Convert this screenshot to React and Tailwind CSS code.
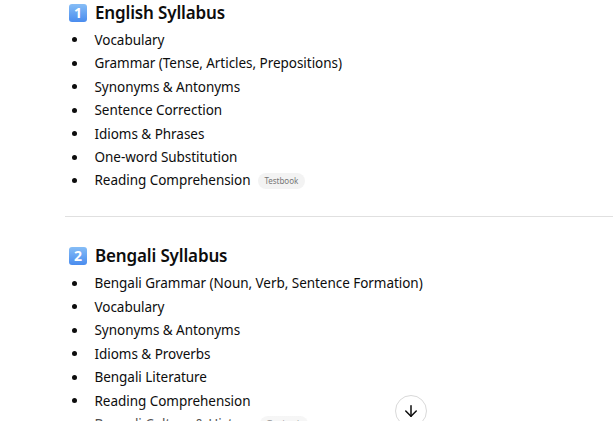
import React from 'react';
import { ArrowDown } from 'lucide-react';

function Keycap({ n }) {
  return (
    <span className="ml-[4px] mr-[8px] flex h-[18px] w-[18px] items-center justify-center rounded-[3px] bg-gradient-to-b from-[#86bdf6] to-[#4a8cee] text-[14px] font-bold leading-none text-white">
      {n}
    </span>
  );
}

function Pill({ text }) {
  return (
    <span className="ml-[7px] inline-flex h-[16px] items-center rounded-full bg-[#f3f3f3] px-[7px] text-[8px] text-[#777777]">
      {text}
    </span>
  );
}

function Section({ n, title, items }) {
  return (
    <section>
      <h2 className="flex h-[24px] items-center text-[17px] font-semibold leading-[24px] tracking-[-0.15px] text-[#0d0d0d]">
        <Keycap n={n} />
        {title}
      </h2>
      <ul className="mt-[3.5px]">
        {items.map((it) => (
          <li key={it.label} className="flex h-[23.45px] items-center text-[13.5px] tracking-[-0.04px] text-[#0d0d0d]">
            <span className="ml-[7px] mr-[17.5px] h-[5px] w-[5px] rounded-full bg-[#0d0d0d]" />
            {it.label}
            {it.pill && <Pill text={it.pill} />}
          </li>
        ))}
      </ul>
    </section>
  );
}

const english = [
  { label: 'Vocabulary' },
  { label: 'Grammar (Tense, Articles, Prepositions)' },
  { label: 'Synonyms & Antonyms' },
  { label: 'Sentence Correction' },
  { label: 'Idioms & Phrases' },
  { label: 'One-word Substitution' },
  { label: 'Reading Comprehension', pill: 'Testbook' },
];

const bengali = [
  { label: 'Bengali Grammar (Noun, Verb, Sentence Formation)' },
  { label: 'Vocabulary' },
  { label: 'Synonyms & Antonyms' },
  { label: 'Idioms & Proverbs' },
  { label: 'Bengali Literature' },
  { label: 'Reading Comprehension' },
  { label: 'Bengali Culture & History', pill: 'Testbook' },
];

export default function App() {
  return (
    <div className="relative h-[421px] w-[613px] overflow-hidden bg-white font-['Noto_Sans',sans-serif]">
      <div className="pl-[65px] pt-[0.7px]">
        <Section n="1" title="English Syllabus" items={english} />
        <hr className="mb-[27px] mt-[24px] border-t border-[#e0e0e0]" />
        <Section n="2" title="Bengali Syllabus" items={bengali} />
      </div>
      {/* fade at the bottom, scroll button sits over it */}
      <div className="absolute bottom-0 left-0 h-[16px] w-full bg-gradient-to-b from-transparent to-white/30" />
      <button className="absolute left-[395px] top-[395px] flex h-[32px] w-[32px] items-center justify-center rounded-full border border-[#d9d9d9] bg-white text-[#0d0d0d]">
        <ArrowDown size={18} />
      </button>
    </div>
  );
}
